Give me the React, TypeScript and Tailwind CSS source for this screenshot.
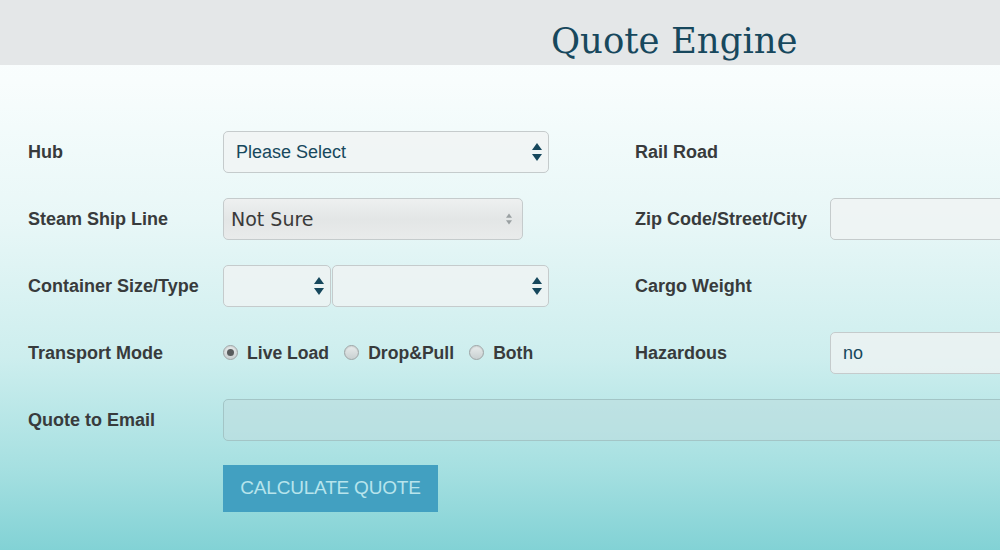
import React from "react";

const Arrows = ({ light = false }: { light?: boolean }) => (
  <svg width={light ? 8 : 10} height={light ? 12 : 20} viewBox="0 0 10 20" className="shrink-0">
    <path d="M5 1 L10 8 L0 8 Z" fill={light ? "#9aa0a2" : "#16475c"} />
    <path d="M5 19 L10 12 L0 12 Z" fill={light ? "#9aa0a2" : "#16475c"} />
  </svg>
);

const Label = ({ children }: { children: React.ReactNode }) => (
  <div className="w-[195px] shrink-0 whitespace-nowrap text-[18px] font-bold text-[#383b3c]">{children}</div>
);

const Radio = ({ checked, label }: { checked?: boolean; label: string }) => (
  <label className="flex shrink-0 items-center gap-[9px] whitespace-nowrap">
    <span className="flex h-[15px] w-[15px] items-center justify-center rounded-full border border-[#9ea4a5] bg-gradient-to-b from-[#e8ecec] to-[#c9d0d1] shadow-[inset_0_1px_1px_rgba(0,0,0,0.1)]">
      {checked && <span className="h-[7px] w-[7px] rounded-full bg-[#585c5d]" />}
    </span>
    <span className="text-[17.6px] font-bold text-[#383b3c]">{label}</span>
  </label>
);

const fieldBox =
  "flex h-[42px] shrink-0 items-center rounded-[5px] border border-[#c5cbcc] bg-[rgba(240,243,243,0.75)]";

export default function App() {
  return (
    <div
      className="h-[550px] w-[1000px] overflow-hidden bg-[linear-gradient(180deg,#fbfefe_0%,#f8fdfd_15%,#e8f7f7_40%,#cdeeee_65%,#a6e0e1_85%,#82d2d5_100%)]"
      style={{ fontFamily: '"Liberation Sans", Arial, sans-serif' }}
    >
      <div className="flex h-[65px] items-end bg-[#e4e7e8] pl-[551px] pb-[7px]">
        <h1
          className="text-[35.5px] leading-none text-[#17485d]"
          style={{ fontFamily: '"DejaVu Serif", "Liberation Serif", serif' }}
        >
          Quote Engine
        </h1>
      </div>

      <div className="flex flex-col gap-[25px] pl-[28px] pt-[66px]">
        <div className="flex h-[42px] items-center">
          <Label>Hub</Label>
          <div className={`${fieldBox} w-[326px] justify-between pl-[12px] pr-[6px]`}>
            <span className="text-[18px] text-[#17485d]">Please Select</span>
            <Arrows />
          </div>
          <div className="w-[86px] shrink-0" />
          <Label>Rail Road</Label>
        </div>

        <div className="flex h-[42px] items-center">
          <Label>Steam Ship Line</Label>
          <div className="flex h-[42px] w-[300px] shrink-0 items-center justify-between rounded-[5px] border border-[#c5cbcc] bg-gradient-to-b from-[#eef0f0] via-[#e3e6e6] to-[#e9ebeb] pl-[7px] pr-[9px]">
            <span className="text-[19px] text-[#3a3a3a]" style={{ fontFamily: '"DejaVu Sans", sans-serif' }}>
              Not Sure
            </span>
            <Arrows light />
          </div>
          <div className="w-[112px] shrink-0" />
          <Label>Zip Code/Street/City</Label>
          <div className={`${fieldBox} w-[220px]`} />
        </div>

        <div className="flex h-[42px] items-center">
          <Label>Container Size/Type</Label>
          <div className={`${fieldBox} w-[108px] justify-end pr-[6px]`}>
            <Arrows />
          </div>
          <div className={`${fieldBox} ml-px w-[217px] justify-end pr-[6px]`}>
            <Arrows />
          </div>
          <div className="w-[86px] shrink-0" />
          <Label>Cargo Weight</Label>
        </div>

        <div className="flex h-[42px] items-center">
          <Label>Transport Mode</Label>
          <div className="flex w-[325px] shrink-0 items-center gap-[15px]">
            <Radio checked label="Live Load" />
            <Radio label="Drop&Pull" />
            <Radio label="Both" />
          </div>
          <div className="w-[87px] shrink-0" />
          <Label>Hazardous</Label>
          <div className={`${fieldBox} w-[220px] pl-[12px] bg-[rgba(225,238,238,0.8)]`}>
            <span className="text-[18px] text-[#17485d]">no</span>
          </div>
        </div>

        <div className="flex h-[42px] items-center">
          <Label>Quote to Email</Label>
          <div className="h-[42px] w-[820px] shrink-0 rounded-[5px] border border-[#a3c5c6] bg-[rgba(190,222,223,0.6)]" />
        </div>
      </div>

      <div className="pl-[223px] pt-[24px]">
        <button className="h-[47px] w-[215px] bg-[#42a0c1] text-[19px] tracking-[-0.2px] text-[#b7e4ec]">
          CALCULATE QUOTE
        </button>
      </div>
    </div>
  );
}
